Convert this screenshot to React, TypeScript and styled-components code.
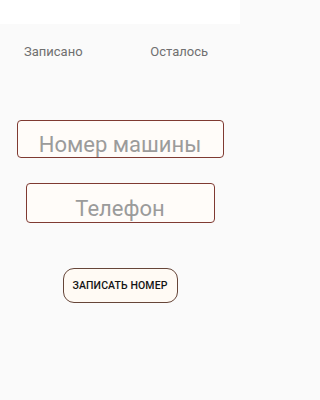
import React from "react";
import styled, { createGlobalStyle } from "styled-components";

const Global = createGlobalStyle`
  html, body { margin: 0; padding: 0; background: #fafafa; }
  * { box-sizing: border-box; }
`;

const Screen = styled.div`
  width: 240px;
  height: 400px;
  background: #fafafa;
  font-family: Roboto, "Noto Sans", sans-serif;
  display: flex;
  flex-direction: column;
  align-items: center;
  overflow: hidden;
`;

const StatusBar = styled.div`
  width: 100%;
  height: 24px;
  background: #ffffff;
  flex-shrink: 0;
`;

const Stats = styled.div`
  width: 100%;
  display: flex;
  justify-content: space-between;
  padding: 0 32px 0 24px;
  margin-top: 20px;
`;

const StatLabel = styled.span`
  font-size: 13px;
  line-height: 16px;
  color: #6f6f6f;
`;

const Field = styled.input<{ $w: number; $h: number; $mt: number }>`
  display: block;
  width: ${(p) => p.$w}px;
  height: ${(p) => p.$h}px;
  margin-top: ${(p) => p.$mt}px;
  padding: 11px 0 0 0;
  border: 1.6px solid #7f3a32;
  border-radius: 4px;
  background: #fffcf9;
  font-family: Roboto, "Noto Sans", sans-serif;
  font-size: 22px;
  text-align: center;
  color: #333;
  outline: none;
  &::placeholder { color: #9b9b9b; }
`;

const SaveButton = styled.button`
  margin-top: 45px;
  width: 115px;
  height: 35px;
  border: 1.8px solid #664538;
  border-radius: 11px;
  background: #fffaf4;
  font-family: Roboto, "Noto Sans", sans-serif;
  font-size: 10.5px;
  font-weight: 500;
  color: #141414;
  padding: 0;
  letter-spacing: 0.1px;
`;

export default function App() {
  return (
    <Screen>
      <Global />
      <StatusBar />
      <Stats>
        <StatLabel>Записано</StatLabel>
        <StatLabel>Осталось</StatLabel>
      </Stats>
      <Field $w={207} $h={38} $mt={60} placeholder="Номер машины" />
      <Field $w={189} $h={40} $mt={25} placeholder="Телефон" />
      <SaveButton>ЗАПИСАТЬ НОМЕР</SaveButton>
    </Screen>
  );
}
